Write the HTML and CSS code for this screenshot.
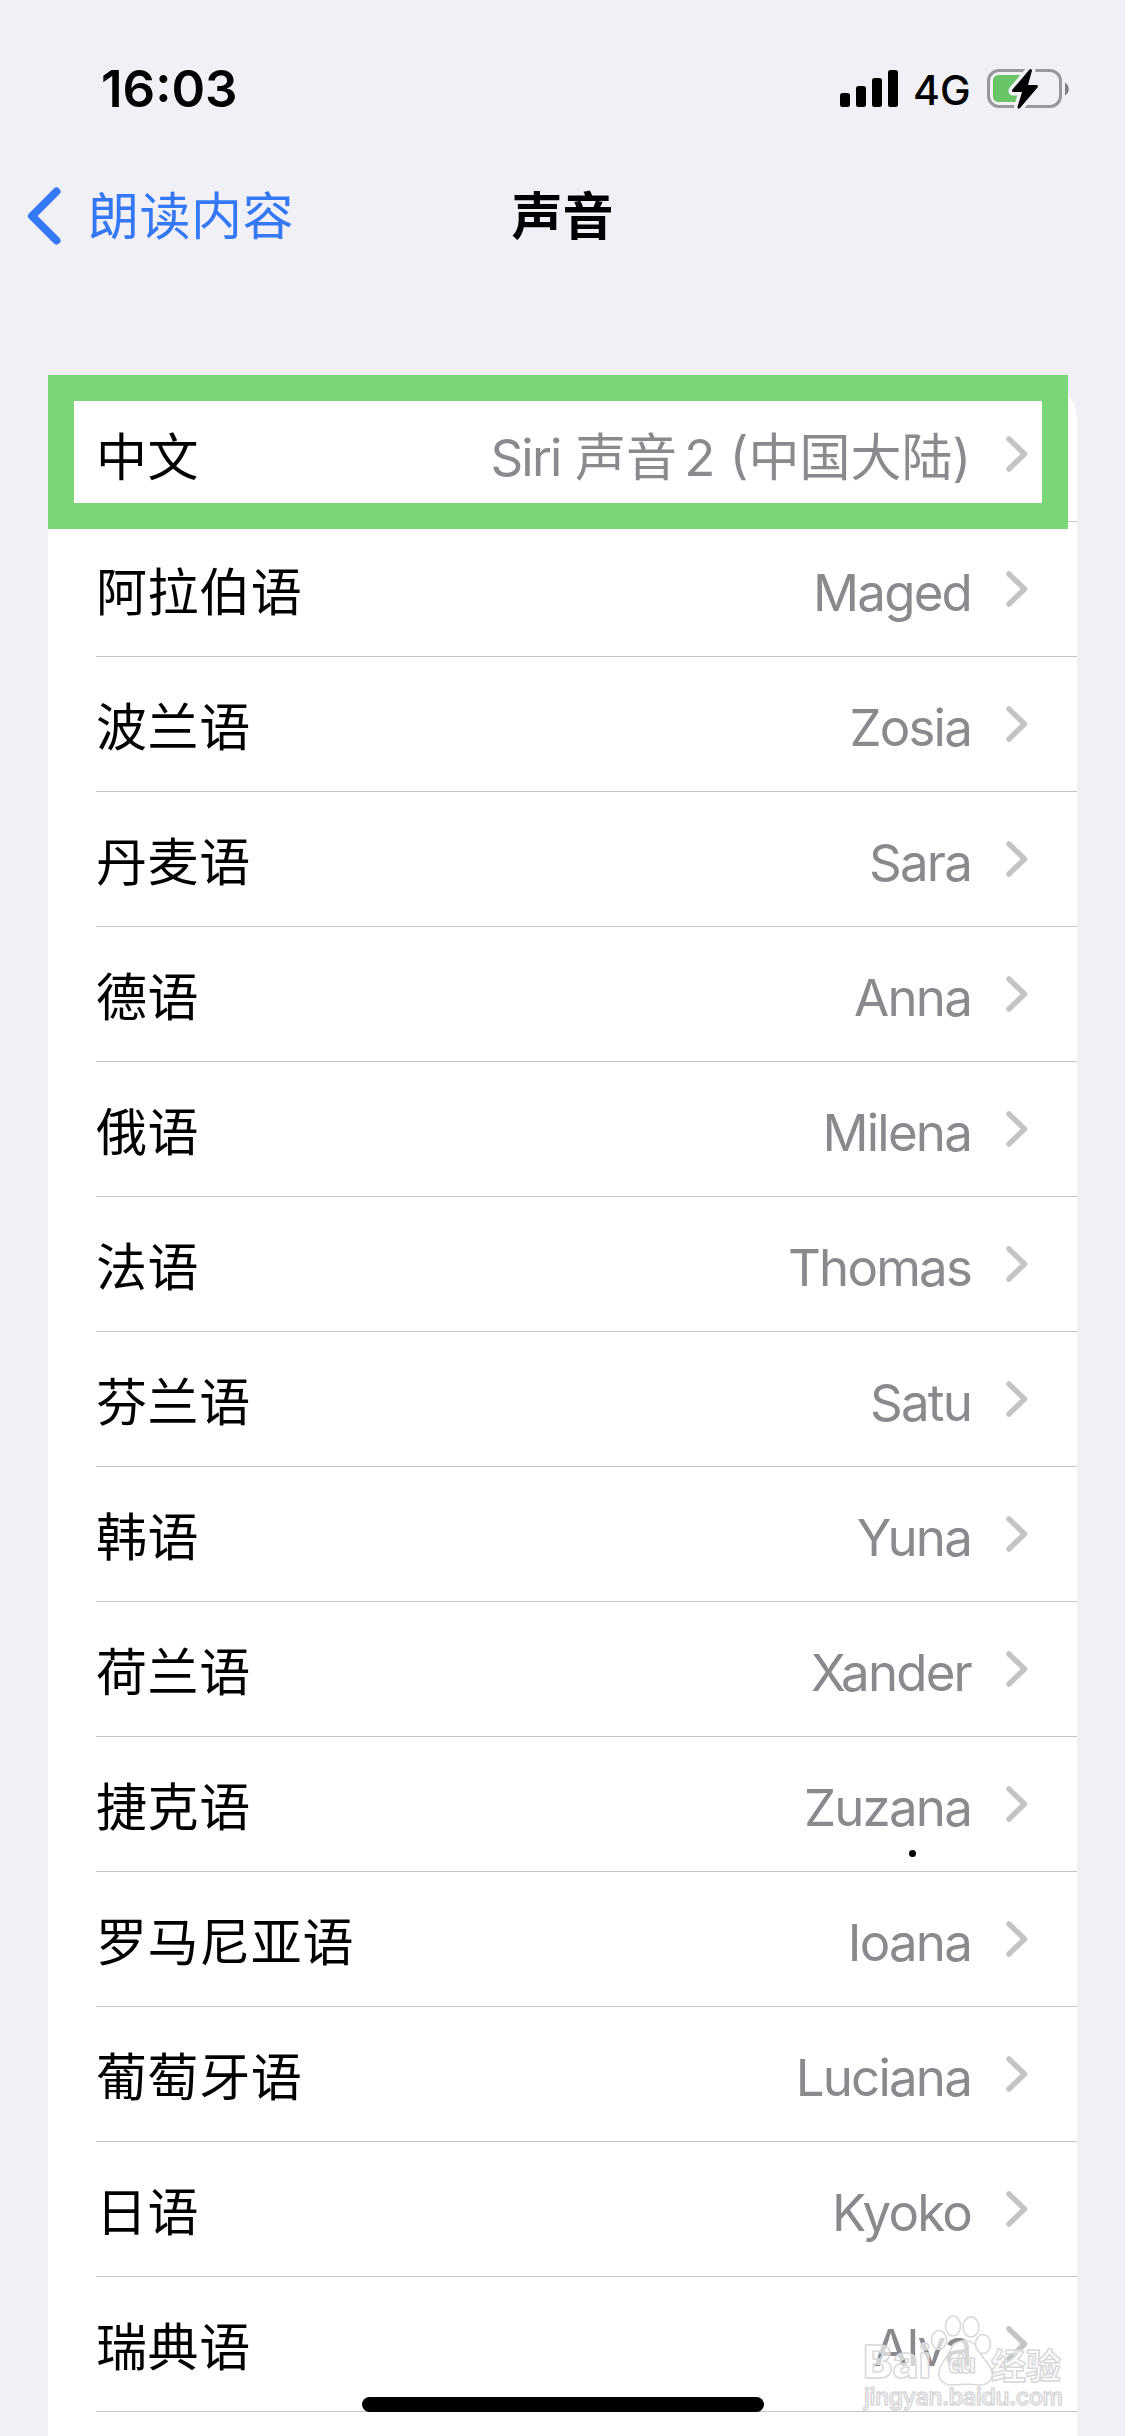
FILE: index.html
```html
<!DOCTYPE html>
<html lang="zh-CN">
<head>
  <meta charset="UTF-8">
  <meta name="viewport" content="width=device-width, initial-scale=1.0">
  <title>声音</title>
  <link rel="stylesheet" href="styles.css">
</head>
<body>

  <!-- Status Bar -->
  <div class="status-bar">
    <span class="time">16:03</span>
    <div class="status-icons">
      <svg class="signal" width="58" height="38" viewBox="0 0 58 38">
        <rect x="0" y="23" width="10" height="14" rx="2.5"/>
        <rect x="16" y="16" width="10" height="21" rx="2.5"/>
        <rect x="32" y="8" width="10" height="29" rx="2.5"/>
        <rect x="48" y="0" width="10" height="37" rx="2.5"/>
      </svg>
      <span class="network">4G</span>
      <svg class="battery" width="83" height="42" viewBox="0 0 83 42">
        <rect x="1.5" y="2.5" width="72" height="36" rx="10.5" fill="none" stroke="#98989d" stroke-width="3"/>
        <path d="M78 14.500c5 2.500 5 10.500 0 13z" fill="#7f7f84"/>
        <rect x="6" y="7" width="32" height="27" rx="5.500" fill="#68c466"/>
        <path d="M42.500 1.500L25.500 21.500q-1.500 2.500 1 2.500h8.500l-4.500 15q0 2.500 2.500 1L50.500 19.500q1-2.500-1-2.500h-8.500l4-14.500q-.5-2.500-2.500-1z" fill="#000" stroke="#f1f0f6" stroke-width="7" paint-order="stroke" stroke-linejoin="round"/>
      </svg>
    </div>
  </div>

  <!-- Navigation -->
  <header>
    <a class="back">
      <svg width="34" height="58" viewBox="0 0 34 58">
        <path d="M29.500 4.500L5 29l24.500 24.500" fill="none" stroke="#3478f6" stroke-width="8" stroke-linecap="round" stroke-linejoin="round"/>
      </svg>
      <span>朗读内容</span>
    </a>
    <h1>声音</h1>
  </header>

  <!-- Voice List -->
  <ul class="list" id="voiceList"></ul>

  <div class="home-indicator"></div>
  <div class="dot"></div>

  <!-- Watermark -->
  <svg class="watermark" width="210" height="104" viewBox="0 0 210 104">
    <g class="mark">
      <text class="mark-logo" x="3" y="66" textLength="68" lengthAdjust="spacingAndGlyphs">Bai</text>
      <path d="M93 33c9-7 20-6 25 4 3 8 10 13 13 20 4 9-2 16-11 16-9-1-18-1-26 0-11 1-18-7-14-17 3-8 9-13 13-23z"/>
      <ellipse cx="79" cy="28" rx="7.500" ry="9.500"/>
      <ellipse cx="93" cy="14" rx="7.500" ry="10"/>
      <ellipse cx="111" cy="15" rx="8" ry="10"/>
      <ellipse cx="123" cy="32" rx="7.500" ry="9.500"/>
      <text class="mark-du" x="88" y="61" textLength="28">du</text>
      <text class="mark-cn" x="131" y="67" textLength="70">经验</text>
      <text class="mark-url" x="4" y="93" textLength="199">jingyan.baidu.com</text>
    </g>
  </svg>

  <script src="script.js"></script>

</body>
</html>
```
FILE: styles.css
```css
:root {
  --background-color: #f1f0f6;
  --primary-color: #3478f6;
  --value-color: #8a8a8e;
  --line-color: #c3c3c5;
  --highlight-color: #7bd67a;
}

* {
  box-sizing: border-box;
}

body {
  position: relative;
  height: 2436px;
  margin: 0;
  overflow: hidden;
  background: var(--background-color);
  color: #000;
  font-family: Inter, "Noto Sans CJK SC", sans-serif;
  font-size: 51px;
}

.status-bar {
  display: flex;
  justify-content: space-between;
  height: 150px;
  padding: 58px 55px 0 101px;
}

.time {
  font-weight: 600;
  line-height: 62px;
}

.status-icons {
  display: flex;
  align-items: flex-start;
}

.signal {
  margin-top: 12px;
}

.network {
  width: 56px;
  margin: 7px 18px 0 15px;
  font-size: 41px;
  font-weight: 500;
  line-height: 50px;
}

.battery {
  margin-top: 10px;
}

header {
  display: grid;
  grid-template-columns: 1fr auto 1fr;
  align-items: center;
  height: 132px;
  padding: 0 27px;
}

.back {
  display: flex;
  align-items: center;
  gap: 27px;
  color: var(--primary-color);
  letter-spacing: 0.5px;
}

.back span {
  padding-bottom: 6px;
}

header h1 {
  margin: 0;
  padding-bottom: 6px;
  font-size: 51px;
  font-weight: 600;
}

.list {
  margin: 105px 48px 0;
  padding: 0;
  height: 2049px;
  list-style: none;
  background: #fff;
  border-radius: 30px 30px 0 0;
}

.row {
  display: flex;
  align-items: center;
  height: 135px;
  margin-left: 48px;
  padding-right: 49px;
  border-bottom: 1px solid var(--line-color);
}

.row .label {
  display: flex;
  flex: 1;
  align-items: baseline;
  justify-content: space-between;
  margin-right: 34px;
}

.row .name {
  letter-spacing: 0.6px;
}

.row .value {
  color: var(--value-color);
  letter-spacing: -1.8px;
}

.highlight .value {
  letter-spacing: 0;
}

.highlight .siri {
  letter-spacing: -1.8px;
}

.highlight .voice {
  margin-right: -7px;
}

/* Frame drawn over the selected language */
.highlight::before {
  content: "";
  position: absolute;
  box-sizing: border-box;
  top: 375px;
  left: 48px;
  width: 1020px;
  height: 154px;
  border: 26px solid var(--highlight-color);
}

.home-indicator {
  position: absolute;
  left: 362px;
  top: 2397px;
  width: 402px;
  height: 15px;
  border-radius: 8px;
  background: #000;
}

.dot {
  position: absolute;
  left: 909px;
  top: 1850px;
  width: 7px;
  height: 7px;
  border-radius: 50%;
  background: #000;
}

.watermark {
  position: absolute;
  left: 860px;
  top: 2312px;
}

.mark {
  fill: rgba(255, 255, 255, 0.65);
  stroke: #d8d8da;
  stroke-width: 1.5;
  font-family: Inter, "Noto Sans CJK SC", sans-serif;
}

.mark-logo {
  font-size: 45px;
  font-weight: 800;
}

.mark-du {
  font-size: 26px;
  font-weight: 700;
}

.mark-cn {
  font-size: 35px;
  font-weight: 700;
}

.mark-url {
  font-size: 23px;
  font-weight: 500;
}
```
FILE: script.js
```js
const voices = [
  ['中文', '<span class="siri">Siri</span> <span class="voice">声音</span> 2 (中国大陆)'],
  ['阿拉伯语', 'Maged'],
  ['波兰语', 'Zosia'],
  ['丹麦语', 'Sara'],
  ['德语', 'Anna'],
  ['俄语', 'Milena'],
  ['法语', 'Thomas'],
  ['芬兰语', 'Satu'],
  ['韩语', 'Yuna'],
  ['荷兰语', 'Xander'],
  ['捷克语', 'Zuzana'],
  ['罗马尼亚语', 'Ioana'],
  ['葡萄牙语', 'Luciana'],
  ['日语', 'Kyoko'],
  ['瑞典语', 'Alva']
];

const list = document.getElementById('voiceList');

voices.forEach(([name, value], index) => {
  const li = document.createElement('li');
  li.classList.add('row');
  if (index === 0) {
    li.classList.add('highlight');
  }
  li.innerHTML = `<div class="label">
      <span class="name">${name}</span>
      <span class="value">${value}</span>
    </div>
    <svg width="23" height="38" viewBox="0 0 23 38">
      <path d="M4 4l15.500 15L4 34" fill="none" stroke="#c4c4c6" stroke-width="5.500" stroke-linecap="round" stroke-linejoin="round"/>
    </svg>`;
  list.appendChild(li);
});
```
